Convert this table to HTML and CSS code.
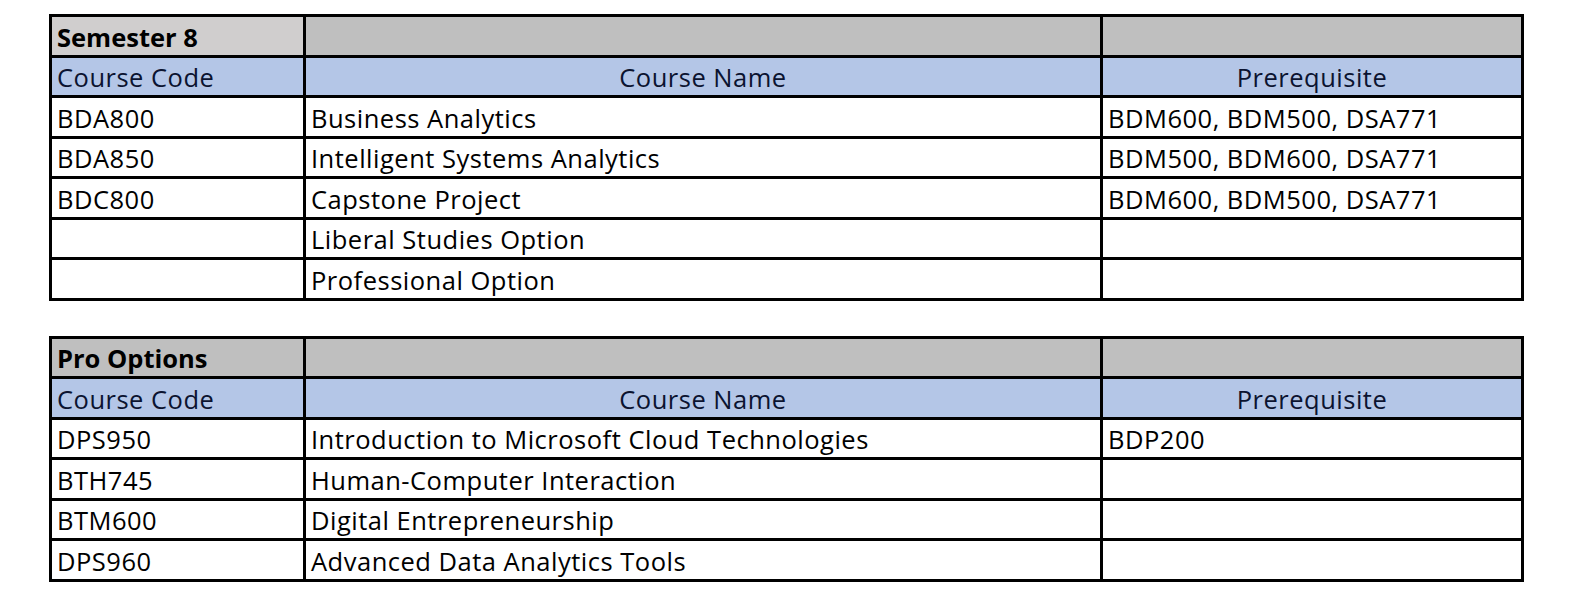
FILE: index.html
```html
<!DOCTYPE html>
<html>
<head>
<meta charset="utf-8">
<link rel="stylesheet" href="styles.css">
</head>
<body>
<div class="page">
  <table class="courses">
    <colgroup><col class="c1"><col class="c2"><col class="c3"></colgroup>
    <tr class="title"><td class="title-cell first">Semester 8</td><td></td><td></td></tr>
    <tr class="head"><td>Course Code</td><td class="center">Course Name</td><td class="center">Prerequisite</td></tr>
    <tr><td>BDA800</td><td>Business Analytics</td><td>BDM600, BDM500, DSA771</td></tr>
    <tr><td>BDA850</td><td>Intelligent Systems Analytics</td><td>BDM500, BDM600, DSA771</td></tr>
    <tr><td>BDC800</td><td>Capstone Project</td><td>BDM600, BDM500, DSA771</td></tr>
    <tr><td></td><td>Liberal Studies Option</td><td></td></tr>
    <tr><td></td><td>Professional Option</td><td></td></tr>
  </table>
  <table class="courses">
    <colgroup><col class="c1"><col class="c2"><col class="c3"></colgroup>
    <tr class="title"><td class="title-cell">Pro Options</td><td></td><td></td></tr>
    <tr class="head"><td>Course Code</td><td class="center">Course Name</td><td class="center">Prerequisite</td></tr>
    <tr><td>DPS950</td><td>Introduction to Microsoft Cloud Technologies</td><td>BDP200</td></tr>
    <tr><td>BTH745</td><td>Human-Computer Interaction</td><td></td></tr>
    <tr><td>BTM600</td><td>Digital Entrepreneurship</td><td></td></tr>
    <tr><td>DPS960</td><td>Advanced Data Analytics Tools</td><td></td></tr>
  </table>
</div>
</body>
</html>
```

FILE: styles.css
```css
html, body {
  margin: 0;
  padding: 0;
  background: #ffffff;
}
.page {
  padding: 14px 0 0 49px;
  display: flex;
  flex-direction: column;
  gap: 35px;
  align-items: flex-start;
}
.courses {
  border-collapse: collapse;
  table-layout: fixed;
  width: 1472px;
  border: 3px solid #000;
  font-family: "Open Sans", "Liberation Sans", sans-serif;
  font-size: 25.5px;
  letter-spacing: 0.5px;
  color: #000;
}
.c1 { width: 254px; }
.c2 { width: 797px; }
.c3 { width: 421px; }
.courses td {
  border: 3px solid #000;
  height: 35.5px;
  padding: 2px 5px 0 5px;
  vertical-align: middle;
  line-height: 28px;
  white-space: nowrap;
  overflow: hidden;
}
.title td {
  background: #bfbfbf;
}
.title td.first {
  background: #d0cece;
}
.title-cell {
  font-weight: bold;
  letter-spacing: 0;
}
.head td {
  background: #b4c6e7;
  color: #0b1330;
}
.center {
  text-align: center;
}
```
